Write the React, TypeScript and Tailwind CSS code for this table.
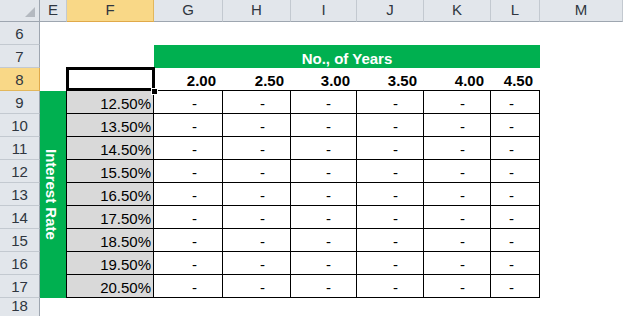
import React from "react";

const COLS = ["E", "F", "G", "H", "I", "J", "K", "L", "M"];
const YEARS = ["2.00", "2.50", "3.00", "3.50", "4.00", "4.50"];
const RATES = ["12.50%", "13.50%", "14.50%", "15.50%", "16.50%", "17.50%", "18.50%", "19.50%", "20.50%"];

const font = { fontFamily: '"Liberation Sans", Arial, sans-serif' };

function ColHeader({ label, active }: { label: string; active?: boolean }) {
  return (
    <div
      className={
        "flex items-center justify-center border-r border-b text-[15px] text-[#2f3640] " +
        (active
          ? "bg-[#f9d887] border-r-[#e2b75c] border-b-[#e0a94a]"
          : "bg-[#e2e6eb] border-r-[#c3c9d0] border-b-[#9ea6b0]")
      }
    >
      {label}
    </div>
  );
}

function RowHeader({ n, active }: { n: number; active?: boolean }) {
  return (
    <div
      className={
        "flex items-end justify-center pb-[2px] border-r border-b text-[15px] leading-[17px] text-[#2f3640] " +
        (active
          ? "bg-[#f9d887] border-r-[#e0a94a] border-b-[#e2b75c]"
          : "bg-[#e2e6eb] border-r-[#9ea6b0] border-b-[#c3c9d0]")
      }
    >
      {n}
    </div>
  );
}

function Blank() {
  return <div className="bg-white" />;
}

export default function App() {
  const cells: React.ReactNode[] = [];

  // Header row
  cells.push(
    <div key="corner" className="relative bg-[#e2e6eb] border-r border-b border-r-[#9ea6b0] border-b-[#9ea6b0]">
      <div className="absolute right-[4px] bottom-[4px] w-0 h-0 border-l-[10px] border-l-transparent border-b-[10px] border-b-[#b4b9c0]" />
    </div>
  );
  COLS.forEach((c) => cells.push(<ColHeader key={"h" + c} label={c} active={c === "F"} />));

  // Row 6
  cells.push(<RowHeader key="r6" n={6} />);
  COLS.forEach((c) => cells.push(<Blank key={"6" + c} />));

  // Row 7
  cells.push(<RowHeader key="r7" n={7} />);
  cells.push(<Blank key="7E" />);
  cells.push(<Blank key="7F" />);
  cells.push(
    <div
      key="7G"
      className="col-span-6 bg-[#00b050] flex items-end justify-center pb-[1px] text-white font-bold text-[15px] leading-[17px]"
    >
      No., of Years
    </div>
  );
  cells.push(<Blank key="7M" />);

  // Row 8
  cells.push(<RowHeader key="r8" n={8} active />);
  cells.push(<Blank key="8E" />);
  cells.push(
    <div key="8F" className="relative bg-white">
      <div className="absolute -left-px -top-px -right-px bottom-0 border-[3px] border-black z-10" />
      <div className="absolute -right-[4px] -bottom-[4px] w-[7px] h-[7px] bg-black border border-white z-20" />
    </div>
  );
  YEARS.forEach((y) =>
    cells.push(
      <div
        key={"8" + y}
        className="flex items-end justify-end pr-[7px] pb-[1px] border-b border-black text-[15px] leading-[17px] font-bold text-black"
      >
        {y}
      </div>
    )
  );
  cells.push(<Blank key="8M" />);

  // Rows 9-17
  RATES.forEach((rate, i) => {
    const n = 9 + i;
    cells.push(<RowHeader key={"r" + n} n={n} />);
    if (i === 0) {
      cells.push(
        <div
          key="E9"
          className="row-span-9 bg-[#00b050] border-r border-black flex items-center justify-center pr-[3px]"
        >
          <span className="[writing-mode:vertical-rl] text-white font-bold text-[15px] leading-[17px]">
            Interest Rate
          </span>
        </div>
      );
    }
    cells.push(
      <div
        key={n + "F"}
        className="bg-[#d9d9d9] flex items-end justify-end pr-[2px] pb-[1px] border-r border-b border-black text-[15px] leading-[17px] text-black"
      >
        {rate}
      </div>
    );
    YEARS.forEach((y) =>
      cells.push(
        <div
          key={n + y}
          className="bg-white flex items-end justify-end pr-[25px] pb-[1px] border-r border-b border-black text-[15px] leading-[17px] text-black"
        >
          -
        </div>
      )
    );
    cells.push(<Blank key={n + "M"} />);
  });

  // Row 18
  cells.push(<RowHeader key="r18" n={18} />);
  COLS.forEach((c) => cells.push(<Blank key={"18" + c} />));

  return (
    <div
      className="w-[623px] h-[316px] overflow-hidden bg-white grid grid-cols-[40px_27px_87px_69px_68px_66px_67px_67px_49px_83px] grid-rows-[22px_repeat(12,23px)_19px]"
      style={font}
    >
      {cells}
    </div>
  );
}
